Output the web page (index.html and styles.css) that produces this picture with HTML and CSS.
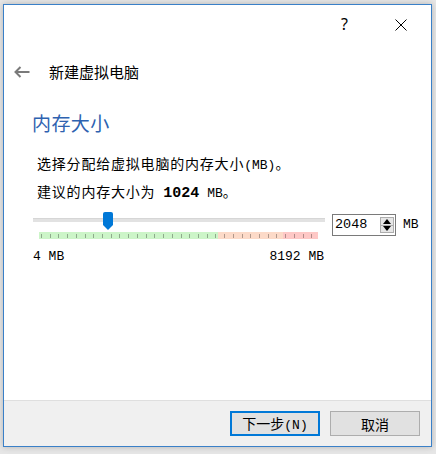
FILE: index.html
```html
<!DOCTYPE html>
<html lang="zh-CN">
<head>
<meta charset="utf-8">
<title>新建虚拟电脑</title>
<link rel="stylesheet" href="styles.css">
</head>
<body>
<div class="window">
  <div class="titlebar">
    <div class="cap cap-help">?</div>
    <div class="cap cap-close">
      <svg width="12" height="12" viewBox="0 0 12 12"><path d="M0.5 0.5 L11.5 11.5 M11.5 0.5 L0.5 11.5" stroke="#000" stroke-width="1" fill="none"/></svg>
    </div>
  </div>
  <div class="content">
    <div class="header">
      <svg class="back" width="16" height="12" viewBox="0 0 16 12"><path d="M1.5 6 H15.5 M6.5 1 L1.5 6 L6.5 11" stroke="#7a7a7a" stroke-width="2" fill="none"/></svg>
      <span class="header-title">新建虚拟电脑</span>
    </div>
    <h1 class="page-title">内存大小</h1>
    <p class="text">选择分配给虚拟电脑的内存大小<span class="mono">(MB)</span>。</p>
    <p class="text">建议的内存大小为 <b class="mono bold">1024</b><span class="mono"> MB</span>。</p>
    <div class="slider-row">
      <div class="slider-col">
        <div class="slider">
          <div class="track"></div>
          <div class="thumb"></div>
          <div class="ticks">
            <div class="zone green"></div>
            <div class="zone peach"></div>
            <div class="zone pink"></div>
          </div>
        </div>
        <div class="limits mono"><span>4 MB</span><span>8192 MB</span></div>
      </div>
      <div class="spinbox">
        <span class="spin-value mono">2048</span>
        <div class="spin-buttons">
          <div class="spin-btn"><svg width="8" height="5" viewBox="0 0 8 5"><path d="M0 5 L4 0 L8 5 Z" fill="#000"/></svg></div>
          <div class="spin-btn"><svg width="8" height="5" viewBox="0 0 8 5"><path d="M0 0 L4 5 L8 0 Z" fill="#000"/></svg></div>
        </div>
      </div>
      <span class="unit mono">MB</span>
    </div>
  </div>
  <div class="footer">
    <button class="btn btn-default">下一步<span class="mono">(N)</span></button>
    <button class="btn">取消</button>
  </div>
</div>
</body>
</html>
```
FILE: styles.css
```css
html, body {
  margin: 0;
  padding: 0;
}
body {
  background: #e6e6e6;
  font-family: "Noto Sans CJK SC", "Noto Sans", sans-serif;
  color: #000;
  width: 436px;
  height: 454px;
  overflow: hidden;
}
.window {
  margin: 4px 0 0 3px;
  width: 427px;
  height: 441px;
  border: 1px solid #3a80c8;
  background: #fff;
  display: flex;
  flex-direction: column;
  box-shadow: 0 0 6px rgba(0, 0, 0, 0.22);
}
.titlebar {
  height: 40px;
  display: flex;
  justify-content: flex-end;
  padding-right: 2px;
}
.cap {
  width: 57px;
  display: flex;
  align-items: center;
  justify-content: center;
}
.cap-help {
  font-family: "Noto Sans", sans-serif;
  font-size: 16px;
  padding-left: 2px;
  padding-bottom: 2px;
  box-sizing: border-box;
}
.content {
  flex: 1;
  display: flex;
  flex-direction: column;
}
.header {
  margin-top: 14px;
  height: 25px;
  display: flex;
  align-items: center;
  padding-left: 10px;
}
.back {
  margin-right: 19px;
}
.header-title {
  font-size: 15px;
  line-height: 25px;
}
.page-title {
  margin: 26px 0 0 28px;
  font-size: 19px;
  line-height: 26px;
  font-weight: normal;
  color: #2e62b0;
  letter-spacing: 0.4px;
}
.text {
  margin: 0 0 0 33px;
  font-size: 14px;
  letter-spacing: 0.8px;
  line-height: 28px;
  height: 28px;
}
.page-title + .text {
  margin-top: 13px;
}
.mono {
  font-family: "Liberation Mono", "DejaVu Sans Mono", monospace;
  font-size: 13px;
  letter-spacing: 0;
}
.bold {
  font-weight: bold;
  font-size: 15px;
  margin-left: 4px;
}
.slider-row {
  margin: 9px 0 0 29px;
  display: flex;
  align-items: flex-start;
}
.slider-col {
  width: 292px;
  display: flex;
  flex-direction: column;
}
.slider {
  position: relative;
  padding-top: 4px;
}
.track {
  height: 4px;
  background: #e2e2e2;
  border-top: 1px solid #d6d6d6;
  box-sizing: border-box;
}
.thumb {
  position: absolute;
  left: 70px;
  top: -2px;
  width: 10px;
  height: 18px;
  background: #0078d7;
  clip-path: polygon(0 0, 100% 0, 100% 72%, 50% 100%, 0 72%);
  border-radius: 2px 2px 0 0;
}
.ticks {
  margin: 10px 0 0 6px;
  width: 279px;
  height: 7px;
  display: flex;
  position: relative;
}
.ticks::after {
  content: "";
  position: absolute;
  left: 2px;
  right: 0;
  top: 2px;
  bottom: 1px;
  background: repeating-linear-gradient(to right, rgba(0, 0, 0, 0.3) 0, rgba(0, 0, 0, 0.3) 1px, transparent 1px, transparent 8.72px);
}
.zone {
  height: 100%;
}
.green {
  width: 179px;
  background: #ccf5c8;
}
.peach {
  width: 65px;
  background: #fcdac8;
}
.pink {
  width: 35px;
  background: #fec8c6;
}
.limits {
  margin-top: 10px;
  display: flex;
  justify-content: space-between;
  line-height: 16px;
  padding-right: 1px;
}
.spinbox {
  margin-left: 7px;
  width: 64px;
  height: 22px;
  box-sizing: border-box;
  border: 1px solid #7a7a7a;
  display: flex;
  align-items: center;
  justify-content: space-between;
  padding: 0 1px 0 2px;
}
.spin-value {
  line-height: 20px;
  font-size: 13.5px;
}
.spin-buttons {
  display: flex;
  flex-direction: column;
  width: 14px;
  height: 16px;
  border: 1px solid #adadad;
  box-sizing: border-box;
  background: #e6e6e6;
}
.spin-btn {
  flex: 1;
  display: flex;
  align-items: center;
  justify-content: center;
}
.spin-btn + .spin-btn {
  border-top: 1px solid #adadad;
}
.unit {
  margin-left: 7px;
  line-height: 22px;
}
.footer {
  height: 46px;
  box-sizing: border-box;
  border-top: 1px solid #dfdfdf;
  background: #f0f0f0;
  display: flex;
  justify-content: flex-end;
  gap: 10px;
  padding: 10px 11px 0 0;
}
.btn {
  width: 90px;
  height: 25px;
  box-sizing: border-box;
  border: 1px solid #adadad;
  background: #e1e1e1;
  font-family: "Noto Sans CJK SC", sans-serif;
  font-size: 14px;
  padding: 0;
  color: #000;
  line-height: 20px;
}
.btn-default {
  border: 2px solid #0078d7;
}
```
